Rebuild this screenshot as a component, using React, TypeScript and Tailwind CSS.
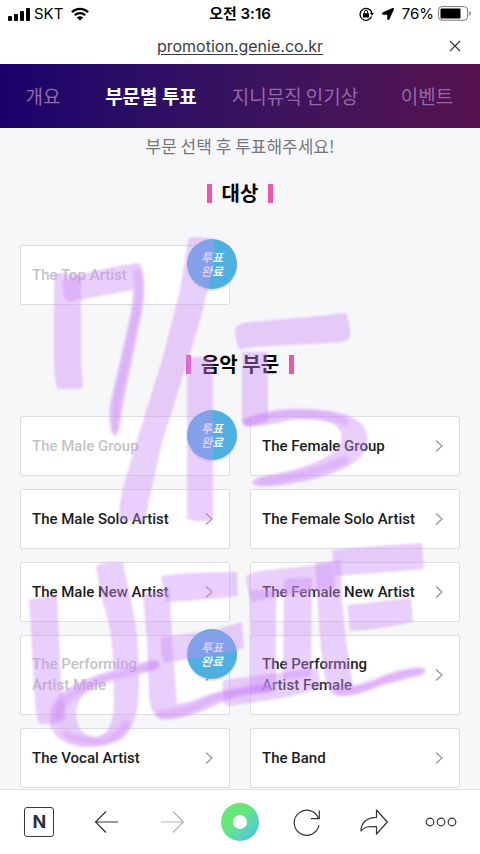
import { FaLocationArrow } from "react-icons/fa";

type Category = {
  name: string;
  voted?: boolean;
};

const tabs = ["개요", "부문별 투표", "지니뮤직 인기상", "이벤트"];

const grandPrize: Category[] = [{ name: "The Top Artist", voted: true }];

const musicCategories: Category[] = [
  { name: "The Male Group", voted: true },
  { name: "The Female Group" },
  { name: "The Male Solo Artist" },
  { name: "The Female Solo Artist" },
  { name: "The Male New Artist" },
  { name: "The Female New Artist" },
  { name: "The Performing\nArtist Male", voted: true },
  { name: "The Performing\nArtist Female" },
  { name: "The Vocal Artist" },
  { name: "The Band" },
];

// Each entry is one pass of the highlighter, overlaps get darker
const markerStrokes = [
  // 7
  "M54 278Q54 273 60 273L81 275L81 360L83 386Q82 389 77 389L58 389Q55 388 54 360Z",
  "M62 281Q90 270 132 264Q140 261 142 268Q146 284 142 310L124 400L118 432Q115 441 112 432Q107 415 111 400L129 322Q133 306 133 290L68 302Q64 302 62 281Z",
  // slash
  "M188 240Q189 237 194 237L213 238Q215 262 208 290L198 328L162 443L149 500L145 521L120 521Q118 512 122 492L136 443L162 360L180 290Z",
  // 1
  "M187 357L213 357L213 520Q200 523 187 519Z",
  // 5
  "M235 328Q238 323 250 322L330 315Q346 311 347 315Q352 333 349 339Q345 342 330 343L270 346Q246 347 240 350Q235 342 235 328Z",
  "M242 352L268 352L268 422Q254 427 244 426Q241 424 242 400Z",
  "M242 420Q262 411 295 409Q350 409 363 425Q373 444 360 458Q340 476 290 484Q252 489 252 482Q253 478 275 474Q320 465 337 449Q347 434 334 424Q318 417 290 420Q270 426 250 426Q243 425 242 420Z",
  // ㅕ shape
  "M29 599L57 596L59 640L61 680L66 719Q58 725 40 724Q36 721 35 700Z",
  "M96 567Q99 562 123 562Q126 580 132 605Q140 640 139 690Q138 724 123 738Q105 748 80 747Q53 742 50 723Q48 700 70 687Q90 675 124 668L152 660Q161 660 159 666Q156 671 136 674Q108 678 92 687Q76 698 76 715Q78 736 95 737Q112 736 114 705L113 655Q110 620 102 600Z",
  // first E
  "M143 594L170 590L172 640L177 704Q190 703 207 695Q225 690 247 687L270 684L271 692Q240 694 222 702Q190 718 165 720Q150 718 149 695L147 640Z",
  "M161 576Q190 572 237 572L238 596Q205 600 166 602Z",
  "M161 637Q190 634 216 629L242 622L244 648Q220 656 190 659L164 663Q160 655 161 637Z",
  "M223 680Q255 676 285 672L318 668L321 688Q290 698 250 703L226 706Q222 700 223 680Z",
  // joined bars
  "M246 577Q250 571 270 570L315 565L333 563L335 588Q290 594 251 602Q248 595 246 577Z",
  "M250 590L276 590L276 692L250 694Z",
  "M284 580Q286 577 312 578L311 675Q300 680 283 679Z",
  // second E
  "M315 563L341 560L342 600L346 640L353 686Q370 684 384 676Q402 669 421 668Q429 669 423 674Q405 680 382 685Q360 695 345 696Q330 697 326 684Q320 650 318 610Z",
  "M332 550Q360 547 390 545L422 543L424 569Q390 572 335 576Z",
  "M347 605Q375 602 411 598L413 622Q385 629 350 631Z",
];

// Where the marker tip turns thin the ink is denser
const denseStrokes = [
  "M137 272Q142 290 136 315L117 400L115 428",
  "M248 422Q275 412 300 414Q330 414 345 422",
  "M345 460Q310 476 260 482",
  "M58 716Q60 700 80 690Q105 677 155 665",
  "M66 734Q80 743 105 741Q120 737 126 724",
  "M160 714Q185 714 212 699Q238 690 266 688",
  "M338 691Q350 693 380 681Q400 673 420 671",
];

function SignalIcon() {
  return (
    <svg width="22" height="14" viewBox="0 0 22 14" aria-hidden="true">
      <rect x="0" y="9" width="4" height="5" rx="1" />
      <rect x="6" y="7" width="4" height="7" rx="1" />
      <rect x="12" y="4" width="4" height="10" rx="1" />
      <rect x="18" y="1" width="4" height="13" rx="1" />
    </svg>
  );
}

function WifiIcon() {
  return (
    <svg width="18" height="14" viewBox="0 0 18 14" aria-hidden="true">
      <g fill="none" stroke="#000" strokeWidth="2.3">
        <path d="M.9 5.1a11.6 11.6 0 0 1 16.2 0" />
        <path d="M3.8 8.2a7.4 7.4 0 0 1 10.4 0" />
      </g>
      <path d="M9 13.6 5.9 10.5a4.4 4.4 0 0 1 6.2 0Z" />
    </svg>
  );
}

function RotationLockIcon() {
  return (
    <svg width="15" height="14" viewBox="0 0 15 14" aria-hidden="true">
      <path
        d="M12.6 9.6A6 6 0 1 1 12.9 6"
        fill="none"
        stroke="#000"
        strokeWidth="1.3"
      />
      <path d="M10.9 6h4l-2 2.8Z" />
      <rect x="4" y="6.3" width="6" height="4.2" rx=".6" />
      <path d="M5.3 6.5V5a1.7 1.7 0 0 1 3.4 0v1.5" fill="none" stroke="#000" />
    </svg>
  );
}

function BatteryIcon() {
  return (
    <svg width="34" height="15" viewBox="0 0 34 15" aria-hidden="true">
      <rect x=".6" y=".6" width="29" height="13.6" rx="3.4" fill="none" stroke="#777" />
      <rect x="2.5" y="2.5" width="20" height="10" rx="1" />
      <path d="M31.4 5c2 .8 2 4.2 0 5Z" fill="#777" />
    </svg>
  );
}

function StatusBar() {
  return (
    <div className="grid grid-cols-[1fr_auto_1fr] items-center h-[27px] px-2 text-[15px] leading-5 text-black">
      <div className="flex items-center gap-1">
        <SignalIcon />
        <span>SKT</span>
        <span className="pl-1">
          <WifiIcon />
        </span>
      </div>
      <span className="font-semibold">오전 3:16</span>
      <div className="flex items-center justify-end gap-2">
        <RotationLockIcon />
        <FaLocationArrow className="text-xs" />
        <div className="flex items-center gap-1">
          <span>76%</span>
          <BatteryIcon />
        </div>
      </div>
    </div>
  );
}

function AddressBar() {
  return (
    <div className="relative flex items-center justify-center h-[37px]">
      <a href="#" className="text-base text-[#3c3c40] underline underline-offset-2">
        promotion.genie.co.kr
      </a>
      <button aria-label="닫기" className="absolute right-[18px] p-px">
        <svg width="12" height="12" viewBox="0 0 12 12" fill="none" stroke="#333">
          <path d="M1 1l10 10M11 1 1 11" strokeWidth="1.1" />
        </svg>
      </button>
    </div>
  );
}

function SectionTitle({ children }: { children: string }) {
  return (
    <h2 className="flex items-center justify-center gap-[10px] text-xl leading-[30px] font-bold text-black">
      <span className="w-[5px] h-[19px] bg-[#ea55ad]" />
      {children}
      <span className="w-[5px] h-[19px] bg-[#ea55ad]" />
    </h2>
  );
}

function CategoryCard({ name, voted }: Category) {
  return (
    <a
      href="#"
      className="relative flex items-center min-h-[60px] pl-[11px] pr-4 py-[18px] bg-white border border-[#dedee0] rounded-xs"
    >
      <span
        className={`flex-1 font-[Roboto,sans-serif] text-[15px] leading-[21px] font-medium whitespace-pre-line ${
          voted ? "text-[#c4c4c6]" : "text-[#1c1c1f]"
        }`}
      >
        {name}
      </span>
      <svg width="8" height="14" viewBox="0 0 8 14" fill="none" aria-hidden="true">
        <path d="M1 1.5l6 5.5-6 5.5" stroke="#98989c" strokeWidth="1.3" />
      </svg>
      {voted && (
        <span className="absolute -top-[7px] -right-2 flex items-center justify-center size-[50px] rounded-full bg-[#4fafe0] shadow-[0_2px_2px_rgba(0,0,0,0.12)] text-xs leading-[14px] font-medium italic text-white text-center">
          투표
          <br />
          완료
        </span>
      )}
    </a>
  );
}

function CategoryGrid({ items }: { items: Category[] }) {
  return (
    <div className="grid grid-cols-2 gap-x-5 gap-y-[13px] px-5">
      {items.map((item) => (
        <CategoryCard key={item.name} {...item} />
      ))}
    </div>
  );
}

function MarkerDrawing() {
  return (
    <svg
      className="absolute top-0 left-0 pointer-events-none"
      width="480"
      height="854"
      viewBox="0 0 480 854"
      aria-hidden="true"
    >
      <defs>
        <filter id="soft">
          <feGaussianBlur stdDeviation="1.3" />
        </filter>
        <filter id="softer">
          <feGaussianBlur stdDeviation="2.2" />
        </filter>
      </defs>
      <g fill="#cb8cf5" fillOpacity=".42" filter="url(#soft)">
        {markerStrokes.map((d) => (
          <path key={d} d={d} />
        ))}
      </g>
      <g
        fill="none"
        stroke="#cb80f8"
        strokeOpacity=".36"
        strokeWidth="8"
        strokeLinecap="round"
        filter="url(#softer)"
      >
        {denseStrokes.map((d) => (
          <path key={d} d={d} />
        ))}
      </g>
    </svg>
  );
}

function BottomBar() {
  return (
    <nav className="grid grid-cols-7 place-items-center h-[65px] px-[6px] bg-white border-t border-[#e0e0e3]">
      <button
        aria-label="네이버 홈"
        className="flex items-center justify-center size-[30px] border border-[#333a42] rounded-[3px] text-lg leading-none font-bold text-[#2b323a]"
      >
        N
      </button>
      <button aria-label="뒤로">
        <svg width="24" height="24" viewBox="0 0 24 24" fill="none" stroke="#333338" strokeWidth="1.2">
          <path d="M12 1.5 1.5 12 12 22.5M1.5 12H24" />
        </svg>
      </button>
      <button aria-label="앞으로">
        <svg width="24" height="24" viewBox="0 0 24 24" fill="none" stroke="#b4b4b8" strokeWidth="1.2">
          <path d="M12 1.5 22.5 12 12 22.5M22.5 12H0" />
        </svg>
      </button>
      <button
        aria-label="그린닷"
        className="flex items-center justify-center size-[38px] rounded-full bg-linear-to-br from-[#67e678] from-40% to-[#50bdee]"
      >
        <span className="size-[14px] rounded-full bg-white" />
      </button>
      <button aria-label="새로고침">
        <svg width="28" height="28" viewBox="0 0 28 28" fill="none" stroke="#333338" strokeWidth="1.2">
          <path d="M26 17.2A12.5 12.5 0 1 1 25.5 10.5M26.3 2.5v8.2h-8.5" />
        </svg>
      </button>
      <button aria-label="공유">
        <svg width="28" height="26" viewBox="0 0 28 26" fill="none" stroke="#333338" strokeWidth="1.2" strokeLinejoin="round">
          <path d="M16.5 1 27.3 13 16.5 25v-7.3C9 17.2 4.5 17.5 1 22 1 13.5 7 8.3 16.5 8.3Z" />
        </svg>
      </button>
      <button aria-label="더보기">
        <svg width="32" height="10" viewBox="0 0 32 10" fill="none" stroke="#333338" strokeWidth="1.2">
          <circle cx="5" cy="5" r="3.8" />
          <circle cx="16" cy="5" r="3.8" />
          <circle cx="27" cy="5" r="3.8" />
        </svg>
      </button>
    </nav>
  );
}

export default function App() {
  return (
    <div className="relative flex flex-col min-h-screen bg-white font-[Inter,'Noto_Sans_CJK_KR',sans-serif]">
      {/* Barra del sistema y dirección */}
      <StatusBar />
      <AddressBar />

      {/* Pestañas */}
      <nav className="grid grid-cols-[86fr_130fr_158fr_106fr] items-center h-16 bg-linear-to-r from-[#1b006c] to-[#561150] font-['Noto_Sans_CJK_KR',sans-serif] text-[19px] leading-7 text-center whitespace-nowrap">
        {tabs.map((tab, i) => (
          <a
            key={tab}
            href="#"
            className={i === 1 ? "font-bold text-white" : "font-normal text-[#9468a8]"}
          >
            {tab}
          </a>
        ))}
      </nav>

      {/* Contenido */}
      <main className="flex-1 bg-[#f7f7fa] font-['Noto_Sans_CJK_KR',sans-serif]">
        <p className="pt-1 text-[17px] leading-7 font-normal text-[#77777b] text-center">
          부문 선택 후 투표해주세요!
        </p>
        <section className="pt-[18px]">
          <SectionTitle>대상</SectionTitle>
          <div className="pt-[37px]">
            <CategoryGrid items={grandPrize} />
          </div>
        </section>
        <section className="pt-11">
          <SectionTitle>음악 부문</SectionTitle>
          <div className="pt-[37px]">
            <CategoryGrid items={musicCategories} />
          </div>
        </section>
      </main>

      <BottomBar />
      <MarkerDrawing />
    </div>
  );
}
